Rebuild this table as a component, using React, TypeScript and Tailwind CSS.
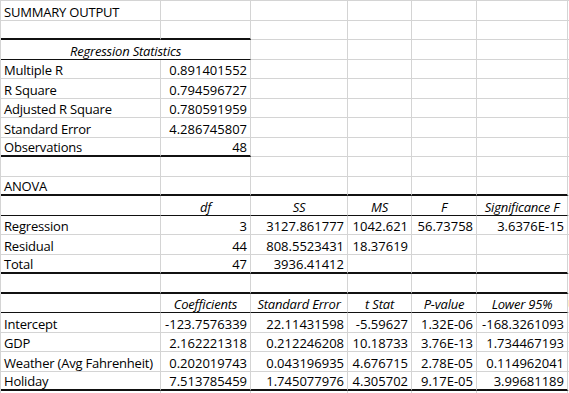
import React from 'react'

type Line = 'thin' | 'black' | 'thick'

type Row = {
  cells: string[]
  header?: boolean
  merged?: boolean
  bottom?: Line
  span?: number // how many columns the bottom line covers
}

const widths = ['w-[160px]', 'w-[90px]', 'w-[97px]', 'w-[64px]', 'w-[65px]', 'w-[91px]', 'flex-1']

const rows: Row[] = [
  { cells: ['SUMMARY OUTPUT'] },
  { cells: [], bottom: 'thick', span: 2 },
  { cells: ['Regression Statistics'], merged: true, bottom: 'black', span: 2 },
  { cells: ['Multiple R', '0.891401552'] },
  { cells: ['R Square', '0.794596727'] },
  { cells: ['Adjusted R Square', '0.780591959'] },
  { cells: ['Standard Error', '4.286745807'] },
  { cells: ['Observations', '48'], bottom: 'thick', span: 2 },
  { cells: [] },
  { cells: ['ANOVA'], bottom: 'thick', span: 6 },
  { cells: ['', 'df', 'SS', 'MS', 'F', 'Significance F'], header: true, bottom: 'black', span: 6 },
  { cells: ['Regression', '3', '3127.861777', '1042.621', '56.73758', '3.6376E-15'] },
  { cells: ['Residual', '44', '808.5523431', '18.37619'] },
  { cells: ['Total', '47', '3936.41412'], bottom: 'thick', span: 6 },
  { cells: [], bottom: 'thick', span: 6 },
  {
    cells: ['', 'Coefficients', 'Standard Error', 't Stat', 'P-value', 'Lower 95%', 'Upper 95%'],
    header: true,
    bottom: 'black',
    span: 6,
  },
  { cells: ['Intercept', '-123.7576339', '22.11431598', '-5.59627', '1.32E-06', '-168.3261093'] },
  { cells: ['GDP', '2.162221318', '0.212246208', '10.18733', '3.76E-13', '1.734467193'] },
  { cells: ['Weather (Avg Fahrenheit)', '0.202019743', '0.043196935', '4.676715', '2.78E-05', '0.114962041'] },
  { cells: ['Holiday', '7.513785459', '1.745077976', '4.305702', '9.17E-05', '3.99681189'], bottom: 'thick', span: 6 },
  { cells: [] },
]

const lineClass: Record<Line, string> = {
  thin: 'border-b border-b-[#d4d4d4]',
  black: 'border-b border-b-[#111]',
  thick: 'border-b-2 border-b-[#111]',
}

function Cell({ row, i }: { row: Row; i: number }) {
  const text = row.cells[i] ?? ''
  const line: Line = row.bottom && i < (row.span ?? 0) ? row.bottom : 'thin'
  const isLast = i === widths.length - 1

  let align = 'justify-start pl-[3px] tracking-[-0.2px]'
  if (row.header && i > 0 && !isLast) align = 'justify-center italic tracking-[-0.2px]'
  else if (isLast) align = 'justify-start pl-0'
  else if (i > 0) align = 'justify-end pr-[3px]'

  return (
    <div
      className={`${widths[i]} h-full flex items-end overflow-hidden whitespace-nowrap ${lineClass[line]} ${
        isLast ? '' : 'border-r border-r-[#d4d4d4]'
      } ${align}`}
    >
      <span className="leading-[15px]">{text}</span>
    </div>
  )
}

export default function App() {
  return (
    <div
      className="w-[569px] h-[393px] overflow-hidden bg-white text-black text-[13px] border-l border-t border-[#d4d4d4]"
      style={{ fontFamily: '"Open Sans", sans-serif' }}
    >
      {rows.map((row, r) => (
        <div key={r} className="flex h-[19.5px]">
          {row.merged ? (
            <>
              <div
                className={`w-[250px] h-full flex items-end justify-center italic tracking-[-0.2px] border-r border-r-[#d4d4d4] ${lineClass[row.bottom ?? 'thin']}`}
              >
                <span className="leading-[15px]">{row.cells[0]}</span>
              </div>
              {[2, 3, 4, 5, 6].map((i) => (
                <Cell key={i} row={{ ...row, cells: [], bottom: undefined }} i={i} />
              ))}
            </>
          ) : (
            widths.map((_, i) => <Cell key={i} row={row} i={i} />)
          )}
        </div>
      ))}
    </div>
  )
}
